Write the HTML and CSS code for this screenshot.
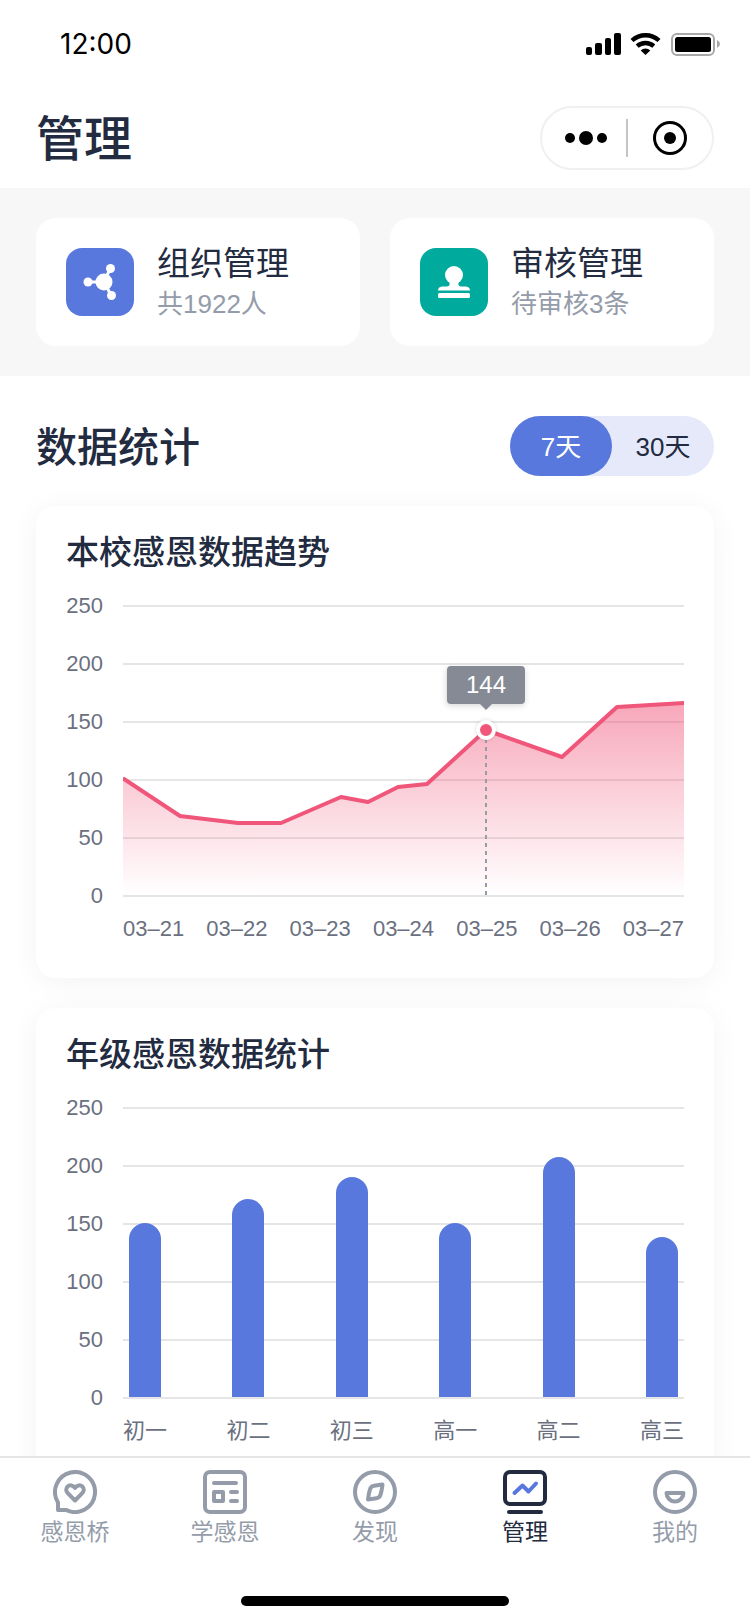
FILE: index.html
```html
<!DOCTYPE html>
<html lang="zh-CN">
<head>
  <meta charset="UTF-8">
  <meta name="viewport" content="width=device-width, initial-scale=1.0">
  <title>管理</title>
  <link rel="stylesheet" href="styles.css">
</head>
<body>
  <div class="status-bar">
    <span class="time">12:00</span>
    <svg class="status-icons" width="134" height="24" viewBox="0 0 134 24">
      <!-- signal -->
      <rect x="0" y="15" width="6" height="8" rx="2"/>
      <rect x="9" y="11" width="7" height="12" rx="2"/>
      <rect x="19" y="6" width="6" height="17" rx="2"/>
      <rect x="28" y="1" width="7" height="22" rx="2"/>
      <!-- wifi -->
      <path d="M46 8.5a20 20 0 0 1 27 0" fill="none" stroke="#000" stroke-width="4.4"/>
      <path d="M51.2 14.2a12.5 12.5 0 0 1 16.600 0" fill="none" stroke="#000" stroke-width="4.4"/>
      <path d="M59.500 23l-4.800-4.600a7 7 0 0 1 9.600 0z"/>
      <!-- battery -->
      <rect x="86" y="2" width="42" height="21" rx="5" fill="none" stroke="#a8a8a8" stroke-width="2"/>
      <rect x="89" y="5" width="36" height="15" rx="2.500"/>
      <path d="M131 8q3 1.500 3 4t-3 4z" fill="#a8a8a8"/>
    </svg>
  </div>

  <header class="header">
    <h1>管理</h1>
    <div class="capsule">
      <button class="capsule-btn more" aria-label="更多">
        <svg width="42" height="14" viewBox="0 0 42 14"><circle cx="5" cy="7" r="5"/><circle cx="21" cy="7" r="7"/><circle cx="37" cy="7" r="5"/></svg>
      </button>
      <button class="capsule-btn" aria-label="关闭">
        <svg width="34" height="34" viewBox="0 0 34 34"><circle cx="17" cy="17" r="15.500" fill="none" stroke="#000" stroke-width="3"/><circle cx="17" cy="17" r="6"/></svg>
      </button>
    </div>
  </header>

  <nav class="entries">
    <a class="entry" href="#org">
      <span class="entry-icon blue">
        <svg width="68" height="68" viewBox="0 0 68 68" fill="#fff" stroke="#fff" stroke-width="3">
          <path d="M22 34h16L44.500 20M38 34l7.500 14" fill="none"/>
          <g stroke="none"><circle cx="38" cy="34" r="8.500"/><circle cx="22" cy="34" r="4.500"/><circle cx="44.500" cy="20.500" r="4.500"/><circle cx="45.500" cy="47.500" r="4.500"/></g>
        </svg>
      </span>
      <span class="entry-text">
        <span class="entry-name">组织管理</span>
        <span class="entry-desc">共1922人</span>
      </span>
    </a>
    <a class="entry" href="#audit">
      <span class="entry-icon teal">
        <svg width="68" height="68" viewBox="0 0 68 68" fill="#fff">
          <circle cx="34" cy="27" r="9"/>
          <path d="M29 33h10q-2 5 2 5.500h5q4 .5 4 4H18q0-3.500 4-4h5q4-.5 2-5.500z"/>
          <rect x="18" y="45" width="32" height="5" rx="1.500"/>
        </svg>
      </span>
      <span class="entry-text">
        <span class="entry-name">审核管理</span>
        <span class="entry-desc">待审核3条</span>
      </span>
    </a>
  </nav>

  <main class="main">
    <div class="section-head">
      <h2>数据统计</h2>
      <div class="toggle">
        <button class="toggle-btn active">7天</button>
        <button class="toggle-btn">30天</button>
      </div>
    </div>

    <section class="card">
      <h3>本校感恩数据趋势</h3>
      <div class="chart">
        <div class="y-axis"><span>250</span><span>200</span><span>150</span><span>100</span><span>50</span><span>0</span></div>
        <div class="plot">
          <svg class="trend" viewBox="0 0 561 290" preserveAspectRatio="none">
            <defs>
              <linearGradient id="fade" x1="0" y1="0" x2="0" y2="1">
                <stop offset="0" stop-color="#f0567a" stop-opacity=".52"/>
                <stop offset="1" stop-color="#f0567a" stop-opacity="0"/>
              </linearGradient>
            </defs>
            <path d="M0 173L57 211L115 218H158L218 192L245 197L275 182L304 179L363 125L439 152L494 102L561 98V290H0z" fill="url(#fade)"/>
            <path d="M1 174L57 211L115 218H158L218 192L245 197L275 182L304 179L363 125L439 152L494 102L561 98" fill="none" stroke="#f0567a" stroke-width="4" stroke-linejoin="round" stroke-linecap="round"/>
            <path d="M363 134V290" stroke="#949caa" stroke-width="2" stroke-dasharray="4 4"/>
          </svg>
          <div class="marker" style="left: 64.7%; top: 42.8%">
            <span class="tip">144</span>
          </div>
        </div>
        <div class="x-axis"><span>03–21</span><span>03–22</span><span>03–23</span><span>03–24</span><span>03–25</span><span>03–26</span><span>03–27</span></div>
      </div>
    </section>

    <section class="card">
      <h3>年级感恩数据统计</h3>
      <div class="chart">
        <div class="y-axis"><span>250</span><span>200</span><span>150</span><span>100</span><span>50</span><span>0</span></div>
        <div class="plot bars">
          <div class="bar" style="height: 60%"></div>
          <div class="bar" style="height: 68.4%"></div>
          <div class="bar" style="height: 76%"></div>
          <div class="bar" style="height: 60%"></div>
          <div class="bar" style="height: 82.8%"></div>
          <div class="bar" style="height: 55.2%"></div>
        </div>
        <div class="x-axis"><span>初一</span><span>初二</span><span>初三</span><span>高一</span><span>高二</span><span>高三</span></div>
      </div>
    </section>
  </main>

  <footer class="tabbar">
    <nav class="tabs">
      <a class="tab" href="#bridge">
        <svg viewBox="0 0 44 44"><path d="M5 40V32.500A20 20 0 1 1 13.500 40.100z"/><path d="M22 30.500l-7.500-7.700a4.400 4.400 0 0 1 0-6.200c2-2 5.500-1.600 7.500 1.400 2-3 5.500-3.400 7.500-1.400a4.400 4.400 0 0 1 0 6.200z"/></svg>
        感恩桥
      </a>
      <a class="tab" href="#study">
        <svg viewBox="0 0 44 44"><rect x="2" y="2" width="40" height="40" rx="5"/><path d="M11 13h22M28 22h6M28 31h6" stroke-linecap="round"/><rect x="11" y="22" width="9" height="9"/></svg>
        学感恩
      </a>
      <a class="tab" href="#discover">
        <svg viewBox="0 0 44 44"><circle cx="22" cy="22" r="20"/><path d="M29.500 14.500q-1 8-2.500 11.500-1 2-3.500 2.300L15 29.500q1-8 2.500-11.500 1-2 3.500-2.300z"/></svg>
        发现
      </a>
      <a class="tab current" href="#manage">
        <svg viewBox="0 0 44 44"><rect x="2" y="2" width="40" height="32" rx="5"/><path d="M6 42h32" stroke-linecap="round"/><path class="accent" d="M11.500 23l8-7.500 6 6L33 13.500" stroke-linecap="round"/></svg>
        管理
      </a>
      <a class="tab" href="#mine">
        <svg viewBox="0 0 44 44"><circle cx="22" cy="22" r="20"/><path d="M13.500 23h17a8.500 8.500 0 0 1-17 0z"/></svg>
        我的
      </a>
    </nav>
    <div class="home-indicator"></div>
  </footer>
</body>
</html>
```
FILE: styles.css
```css
* {
  box-sizing: border-box;
}
body {
  margin: 0;
  background: #fff;
  color: #222b40;
  font-family: 'Liberation Sans', 'Noto Sans CJK SC', sans-serif;
  height: 100vh;
  overflow: hidden;
  display: flex;
  flex-direction: column;
}
h1, h2, h3 {
  margin: 0;
  font-weight: 500;
}
a {
  color: inherit;
  text-decoration: none;
}
button {
  border: none;
  background: none;
  padding: 0;
  color: inherit;
  font: inherit;
  cursor: pointer;
}
svg {
  display: block;
}

/* top */
.status-bar {
  flex: none;
  height: 88px;
  padding: 0 30px 0 60px;
  display: flex;
  align-items: center;
  justify-content: space-between;
}
.time {
  font-family: Inter, sans-serif;
  font-size: 28px;
  color: #000;
}
.header {
  flex: none;
  height: 100px;
  padding: 0 36px;
  display: flex;
  align-items: center;
  justify-content: space-between;
}
.header h1 {
  font-size: 48px;
  line-height: 60px;
  padding-top: 4px;
}
.capsule {
  width: 174px;
  height: 64px;
  border: 2px solid #f0f0f0;
  border-radius: 32px;
  display: flex;
  align-items: center;
}
.capsule-btn {
  flex: 1;
  height: 38px;
  display: flex;
  align-items: center;
  justify-content: center;
}
.capsule-btn.more {
  flex: none;
  width: 86px;
  padding-left: 4px;
  border-right: 2px solid #c4c4c4;
}

/* entries */
.entries {
  flex: none;
  background: #f7f7f7;
  padding: 30px 36px;
  display: grid;
  grid-template-columns: 1fr 1fr;
  gap: 30px;
}
.entry {
  background: #fff;
  border-radius: 20px;
  padding: 24px 30px;
  display: flex;
  align-items: center;
  gap: 23px;
}
.entry-icon {
  border-radius: 16px;
}
.blue {
  background: #5878de;
}
.teal {
  background: #00aa9c;
}
.entry-text {
  display: flex;
  flex-direction: column;
}
.entry-name {
  font-size: 33px;
  line-height: 44px;
}
.entry-desc {
  font-size: 26px;
  line-height: 36px;
  color: #949caa;
}

/* charts */
.main {
  flex: 1;
  min-height: 0;
  overflow: hidden;
  padding: 40px 36px 0;
}
.section-head {
  display: flex;
  align-items: center;
  justify-content: space-between;
  margin-bottom: 30px;
}
.section-head h2 {
  font-size: 41px;
  line-height: 56px;
  padding-top: 4px;
}
.toggle {
  display: flex;
  background: #e5e9fa;
  border-radius: 30px;
}
.toggle-btn {
  width: 102px;
  height: 60px;
  border-radius: 30px;
  font-size: 26px;
  padding-bottom: 4px;
}
.toggle-btn.active {
  background: #5878de;
  color: #fff;
}
.card {
  background: #fff;
  border-radius: 20px;
  box-shadow: 0 4px 30px rgba(0, 0, 0, 0.05);
  padding: 25px 30px 30px;
  margin-bottom: 30px;
}
.card h3 {
  font-size: 33px;
  line-height: 44px;
  margin-bottom: 19px;
}
.chart {
  display: grid;
  grid-template-columns: 37px 1fr;
  column-gap: 20px;
  font-size: 22px;
  line-height: 24px;
  color: #6b7080;
}
.y-axis {
  display: flex;
  flex-direction: column;
  justify-content: space-between;
  height: 314px;
  text-align: right;
}
.plot {
  position: relative;
  height: 292px;
  margin-top: 11px;
  background: repeating-linear-gradient(#e5e5e5 0 2px, transparent 2px 58px);
}
.trend {
  width: 100%;
  height: 290px;
}
.marker {
  position: absolute;
  width: 20px;
  height: 20px;
  margin: -10px 0 0 -10px;
  border: 4px solid #fff;
  border-radius: 50%;
  background: #f0567a;
  box-shadow: 0 0 4px rgba(0, 0, 0, 0.15);
}
.tip {
  position: absolute;
  bottom: 32px;
  left: 50%;
  transform: translateX(-50%);
  padding: 0 19px;
  border-radius: 4px;
  background: #868a95;
  color: #fff;
  font-size: 24px;
  line-height: 38px;
  box-shadow: 0 2px 6px rgba(0, 0, 0, 0.15);
}
.tip::after {
  content: '';
  position: absolute;
  top: 100%;
  left: 50%;
  margin-left: -6px;
  border: 6px solid transparent;
  border-top-color: #868a95;
  border-bottom: none;
}
.bars {
  display: flex;
  align-items: flex-end;
  justify-content: space-between;
  padding: 0 6px 2px;
}
.bar {
  width: 32px;
  border-radius: 16px 16px 0 0;
  background: #5878de;
}
.x-axis {
  grid-column: 2;
  display: flex;
  justify-content: space-between;
  margin-top: 8px;
  line-height: 26px;
  padding-bottom: 6px;
}

/* bottom */
.tabbar {
  flex: none;
  height: 168px;
  background: #fff;
  border-top: 2px solid #e5e5e5;
  padding: 12px 0 18px;
  display: flex;
  flex-direction: column;
  align-items: center;
  justify-content: space-between;
  position: relative;
}
.tabs {
  width: 100%;
  display: flex;
}
.tab {
  flex: 1;
  display: flex;
  flex-direction: column;
  align-items: center;
  gap: 2px;
  font-size: 23px;
  line-height: 32px;
  color: #949caa;
}
.tab svg {
  width: 44px;
  height: 44px;
  fill: none;
  stroke: currentColor;
  stroke-width: 4;
  stroke-linejoin: round;
}
.tab .accent {
  stroke: #5878de;
}
.tab.current {
  color: #222b40;
}
.home-indicator {
  width: 268px;
  height: 10px;
  border-radius: 5px;
  background: #000;
}
```
